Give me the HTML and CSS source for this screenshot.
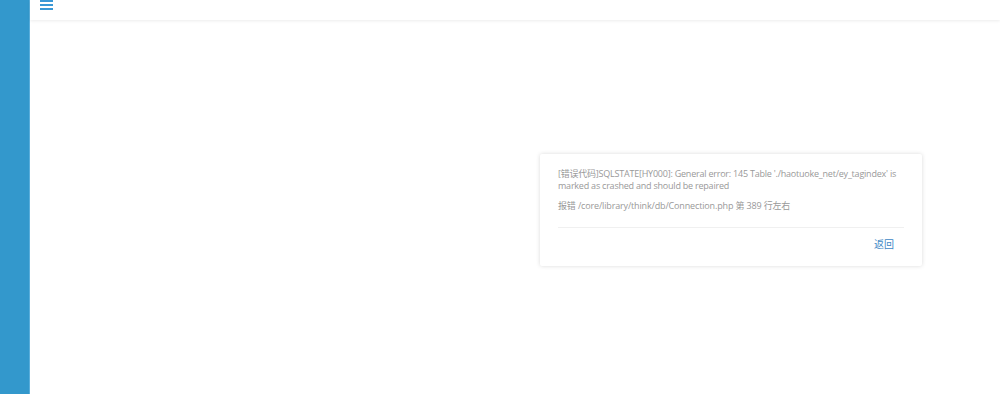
FILE: index.html
```html
<!DOCTYPE html>
<html lang="zh-CN">
<head>
  <meta charset="utf-8">
  <title>错误</title>
  <link rel="stylesheet" href="styles.css">
</head>
<body>
  <div class="sidebar"></div>
  <div class="main">
    <div class="header">
      <svg class="menu-icon" width="13" height="11" viewBox="0 0 13 11">
        <rect x="0" y="1" width="13" height="2" fill="#3a98d6"/>
        <rect x="0" y="5" width="13" height="2" fill="#3a98d6"/>
        <rect x="0" y="9" width="13" height="2" fill="#3a98d6"/>
      </svg>
    </div>
    <div class="content">
      <div class="error-box">
        <p class="error-msg">[错误代码]SQLSTATE[HY000]: General error: 145 Table './haotuoke_net/ey_tagindex' is marked as crashed and should be repaired</p>
        <p class="error-file">报错 /core/library/think/db/Connection.php 第 389 行左右</p>
        <div class="error-foot">
          <a class="back-link" href="#">返回</a>
        </div>
      </div>
    </div>
  </div>
</body>
</html>
```

FILE: styles.css
```css
html, body {
  height: 100%;
}
body {
  margin: 0;
  display: flex;
  font-family: "Open Sans", "Noto Sans CJK SC", sans-serif;
  background: #fff;
  overflow: hidden;
}
.sidebar {
  width: 29px;
  flex: none;
  background: #3398cc;
  border-right: 1px solid #5aaedb;
}
.main {
  flex: 1;
  display: flex;
  flex-direction: column;
}
.header {
  height: 20px;
  padding-left: 10px;
  background: #fff;
  box-shadow: 0 1px 3px rgba(0, 0, 0, 0.08);
  position: relative;
  z-index: 1;
}
.menu-icon {
  display: block;
  margin-top: -1px;
}
.content {
  flex: 1;
  padding: 134px 0 0 510px;
}
.error-box {
  width: 346px;
  padding: 12px 18px 13px;
  background: #fff;
  border-radius: 2px;
  box-shadow: 0 0 4px rgba(0, 0, 0, 0.15);
}
.error-msg, .error-file {
  margin: 0;
  font-size: 9px;
  line-height: 12px;
  color: #999;
  letter-spacing: -0.15px;
}
.error-msg {
  margin-top: 2px;
  margin-right: -12px;
  letter-spacing: -0.22px;
}
.error-file {
  margin-top: 8px;
  padding-bottom: 15px;
  border-bottom: 1px solid #f0f0f0;
}
.error-foot {
  text-align: right;
  padding-top: 3px;
  padding-right: 10px;
}
.back-link {
  font-size: 10px;
  line-height: 14px;
  color: #3e88c5;
  text-decoration: none;
}
```
